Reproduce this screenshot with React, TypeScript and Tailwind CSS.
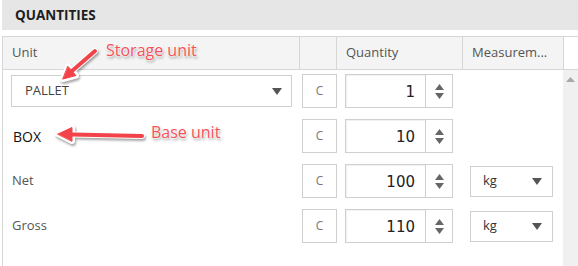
import React from "react";

function Caret({ className = "" }: { className?: string }) {
  return (
    <svg width="10" height="7" viewBox="0 0 10 7" className={className}>
      <polygon points="0,0 10,0 5,7" fill="#555" />
    </svg>
  );
}

function Spinner() {
  return (
    <div className="flex flex-1 flex-col items-center justify-center gap-[3px]">
      <svg width="9" height="6" viewBox="0 0 9 6">
        <polygon points="0,6 9,6 4.5,0" fill="#666" />
      </svg>
      <svg width="9" height="6" viewBox="0 0 9 6">
        <polygon points="0,0 9,0 4.5,6" fill="#666" />
      </svg>
    </div>
  );
}

function QtyRow({ label, value, unit, labelClass }: { label: React.ReactNode; value: string; unit?: string; labelClass?: string }) {
  return (
    <div className="flex h-[34px] items-center">
      <div className={"w-[299px] h-full flex items-center " + (labelClass ?? "")}>{label}</div>
      <div className="w-[35px] h-[34px] border border-[#cfcfcf] flex items-center justify-center text-[12px] text-[#777]">C</div>
      <div className="ml-[8px] w-[108px] h-[34px] border border-[#cfcfcf] flex">
        <div className="w-[80px] border-r border-[#cfcfcf] flex items-center justify-end pr-[10px] pt-[2px] shadow-[inset_1px_1px_1px_rgba(0,0,0,0.06)] text-[15px] text-[#222] font-['DejaVu_Sans',sans-serif]">
          {value}
        </div>
        <Spinner />
      </div>
      {unit && (
        <div className="ml-[17px] w-[83px] h-[31px] border border-[#cfcfcf] flex items-center justify-between pl-[12px] pr-[10px] text-[13px] text-[#333]">
          <span>{unit}</span>
          <Caret />
        </div>
      )}
    </div>
  );
}

export default function App() {
  return (
    <div className="relative w-[578px] h-[266px] overflow-hidden bg-white pl-[2px] font-['Segoe_UI','Open_Sans',sans-serif]">
      <div className="h-[30px] bg-[#e6e6e6] flex items-center pl-[13px] text-[13.5px] font-bold text-[#1e1e1e]">QUANTITIES</div>

      <div className="mt-[6px] h-[230px] flex flex-col">
        {/* header */}
        <div className="flex h-[34px] border-y border-[#d6d6d6] text-[13px] text-[#555]">
          <div className="w-[298px] bg-[#f4f4f4] border-x border-[#d6d6d6] pl-[9px] flex items-center">Unit</div>
          <div className="w-[37px] bg-[#f4f4f4] border-r border-[#d6d6d6]" />
          <div className="w-[126px] bg-[#f4f4f4] border-r border-[#d6d6d6] pl-[9px] flex items-center">Quantity</div>
          <div className="w-[101px] bg-[#f4f4f4] border-r border-[#d6d6d6] pl-[9px] flex items-center">Measurem...</div>
          <div className="flex-1" />
        </div>

        {/* body */}
        <div className="flex flex-1">
          <div className="flex-1 border-l border-[#d6d6d6] pt-[4px] flex flex-col gap-[11px]">
            <QtyRow
              label={
                <div className="ml-[8px] w-[281px] h-[32px] border border-[#cfcfcf] flex items-center justify-between pl-[13px] pr-[9px] text-[13px] text-[#444]">
                  <span>PALLET</span>
                  <Caret />
                </div>
              }
              value="1"
            />
            <QtyRow label="BOX" labelClass="pl-[10px] text-[14px] text-[#111]" value="10" />
            <QtyRow label="Net" labelClass="pl-[9px] text-[13px] text-[#555]" value="100" unit="kg" />
            <QtyRow label="Gross" labelClass="pl-[9px] text-[13px] text-[#555]" value="110" unit="kg" />
          </div>
          <div className="w-[15px] bg-[#f0f0f0] flex justify-center pt-[7px]">
            <svg width="9" height="5" viewBox="0 0 9 5">
              <polygon points="0,5 9,5 4.5,0" fill="#a8a8a8" />
            </svg>
          </div>
        </div>
      </div>

      {/* annotations */}
      <svg className="absolute left-0 top-0 drop-shadow-[1px_2px_1px_rgba(0,0,0,0.35)]" width="578" height="266" viewBox="0 0 578 266">
        <g stroke="#fff" strokeWidth="6" strokeLinecap="round" fill="#fff" strokeLinejoin="round">
          <line x1="95" y1="51" x2="72" y2="71" />
          <polygon points="63,79 76,75.5 68,66.5" />
          <line x1="142" y1="136" x2="72" y2="134.5" />
          <polygon points="58,134 72,127.5 72,141" />
        </g>
        <g stroke="#f2434a" strokeWidth="4" strokeLinecap="round" fill="#f2434a" strokeLinejoin="round">
          <line x1="95" y1="51" x2="72" y2="71" />
          <polygon points="63,79 76,75.5 68,66.5" strokeWidth="1" />
          <line x1="142" y1="136" x2="72" y2="134.5" />
          <polygon points="58,134 72,127.5 72,141" strokeWidth="1" />
        </g>
      </svg>
      <div className="absolute left-[106px] top-[40px] leading-[20px] text-[16px] text-[#f4505a] [text-shadow:0_0_2px_#fff,0_0_2px_#fff,0_0_2px_#fff,1px_2px_3px_rgba(0,0,0,0.45)]">
        Storage unit
      </div>
      <div className="absolute left-[151px] top-[122px] leading-[20px] text-[16px] text-[#f4505a] [text-shadow:0_0_2px_#fff,0_0_2px_#fff,0_0_2px_#fff,1px_2px_3px_rgba(0,0,0,0.45)]">
        Base unit
      </div>
    </div>
  );
}
